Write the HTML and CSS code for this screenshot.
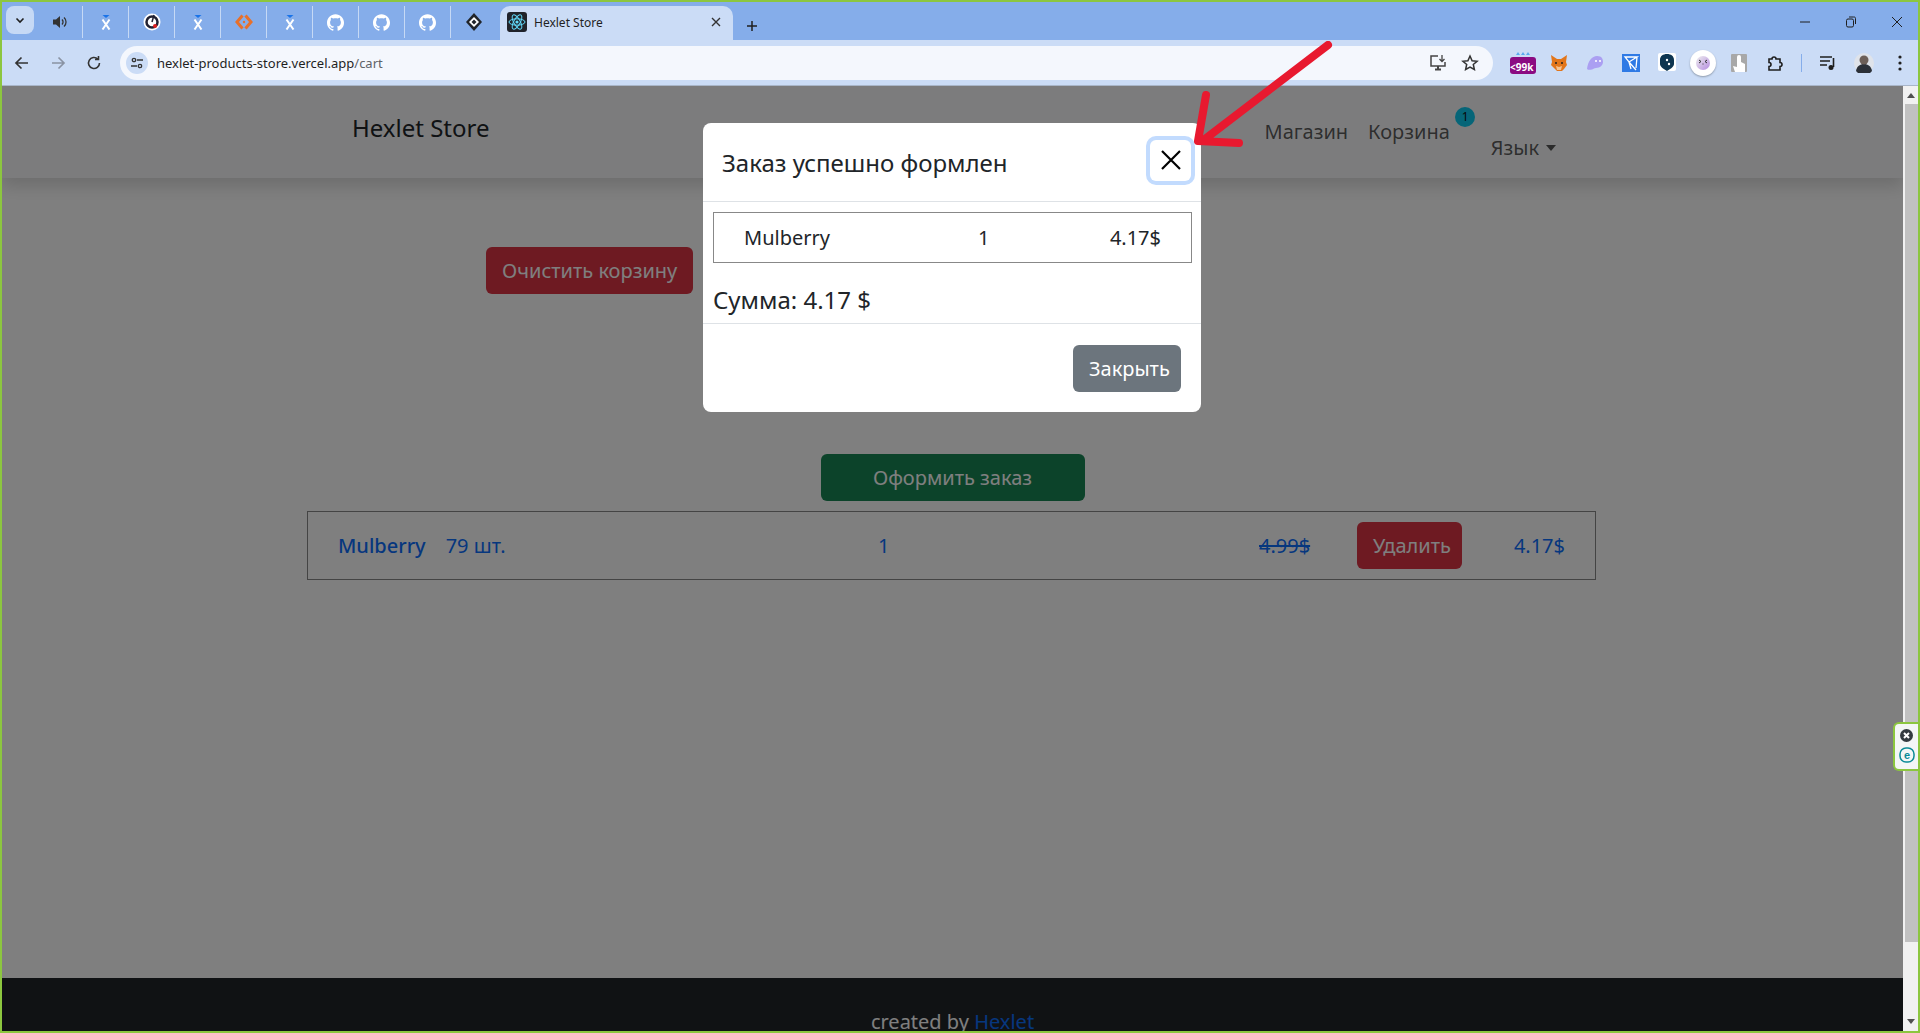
FILE: index.html
```html
<!DOCTYPE html>
<html lang="en">
<head>
    <meta charset="UTF-8">
    <title>Hexlet Store</title>
    <link rel="stylesheet" href="styles.css">
</head>
<body>
<svg class="defs" width="0" height="0">
    <symbol id="gh" viewBox="0 0 24 24"><path fill="currentColor" d="M12 .297c-6.63 0-12 5.373-12 12 0 5.303 3.438 9.8 8.205 11.385.6.113.82-.258.82-.577 0-.285-.01-1.04-.015-2.04-3.338.724-4.042-1.61-4.042-1.61C4.422 18.07 3.633 17.7 3.633 17.7c-1.087-.744.084-.729.084-.729 1.205.084 1.838 1.236 1.838 1.236 1.07 1.835 2.809 1.305 3.495.998.108-.776.417-1.305.76-1.605-2.665-.3-5.466-1.332-5.466-5.93 0-1.31.465-2.38 1.235-3.22-.135-.303-.54-1.523.105-3.176 0 0 1.005-.322 3.3 1.23.96-.267 1.98-.399 3-.399 1.02 0 2.04.132 3 .399 2.28-1.552 3.285-1.23 3.285-1.23.645 1.653.24 2.873.12 3.176.765.84 1.23 1.91 1.23 3.22 0 4.61-2.805 5.625-5.475 5.92.42.36.81 1.096.81 2.22 0 1.606-.015 2.896-.015 3.286 0 .315.21.69.825.57C20.565 22.092 24 17.592 24 12.297c0-6.627-5.373-12-12-12"/></symbol>
    <symbol id="xtab" viewBox="0 0 16 16"><path fill="#1a73e8" d="M4.5 1h7L8 4z"/><path stroke="#fff" stroke-width="2" fill="none" d="M4.5 5.5l7 10M11.5 5.5l-7 10"/></symbol>
</svg>
<div class="window">
    <div class="tabbar">
        <div class="tab-search"><svg width="12" height="12" viewBox="0 0 12 12"><path d="M2.5 4.5L6 8l3.5-3.5" fill="none" stroke="#1f1f1f" stroke-width="1.6"/></svg></div>
        <div class="pinned">
            <div class="pin"><svg width="16" height="16" viewBox="0 0 16 16"><path fill="#333" d="M1 5.5h3L8 2v12L4 10.500H1z"/><path fill="none" stroke="#333" stroke-width="1.3" d="M10 5.500a3.500 3.500 0 0 1 0 5M12 3.500a6 6 0 0 1 0 9"/></svg></div>
            <div class="pin"><svg width="16" height="16"><use href="#xtab"/></svg></div>
            <div class="pin"><svg width="18" height="18" viewBox="0 0 18 18"><circle cx="9" cy="9" r="8.500" fill="#fff"/><circle cx="9" cy="9" r="5.500" fill="none" stroke="#223" stroke-width="2.500"/><path d="M9 9l2-7" stroke="#223" stroke-width="1.500"/><circle cx="12" cy="13" r="2" fill="#e02020"/></svg></div>
            <div class="pin"><svg width="16" height="16"><use href="#xtab"/></svg></div>
            <div class="pin"><svg width="18" height="18" viewBox="0 0 18 18"><path fill="none" stroke="#e8702a" stroke-width="3" d="M7.500 2.500L2 9l5.500 6.500M10.500 2.500L16 9l-5.500 6.500"/><circle cx="9" cy="9" r="1.200" fill="#e8702a"/></svg></div>
            <div class="pin"><svg width="16" height="16"><use href="#xtab"/></svg></div>
            <div class="pin github"><svg width="17" height="17"><use href="#gh"/></svg></div>
            <div class="pin github"><svg width="17" height="17"><use href="#gh"/></svg></div>
            <div class="pin github"><svg width="17" height="17"><use href="#gh"/></svg></div>
            <div class="pin last"><svg width="18" height="18" viewBox="0 0 18 18"><path fill="#20242a" d="M9 0l8 9-8 9-8-9z"/><path fill="#fff" d="M9 4l5 5-5 5-5-5z"/><path fill="#20242a" d="M9 6.500L11.500 9 9 11.500 6.500 9z"/></svg></div>
        </div>
        <div class="tab-active">
            <svg class="favicon" width="20" height="20" viewBox="0 0 20 20"><rect width="20" height="20" rx="3" fill="#20232a"/><g fill="none" stroke="#61dafb" stroke-width="1"><ellipse cx="10" cy="10" rx="8" ry="3.200"/><ellipse cx="10" cy="10" rx="8" ry="3.200" transform="rotate(60 10 10)"/><ellipse cx="10" cy="10" rx="8" ry="3.200" transform="rotate(120 10 10)"/></g><circle cx="10" cy="10" r="1.600" fill="#61dafb"/></svg>
            <span class="tab-title">Hexlet Store</span>
            <svg class="tab-close" width="10" height="10" viewBox="0 0 10 10"><path d="M1 1l8 8M9 1l-8 8" stroke="#333" stroke-width="1.400"/></svg>
        </div>
        <svg class="tab-plus" width="12" height="12" viewBox="0 0 12 12"><path d="M6 1v10M1 6h10" stroke="#1f1f1f" stroke-width="1.500"/></svg>
        <div class="win-controls">
            <svg width="12" height="12" viewBox="0 0 12 12"><path d="M1 6h10" stroke="#1f1f1f"/></svg>
            <svg width="12" height="12" viewBox="0 0 12 12"><rect x="1.500" y="3" width="7" height="8" rx="1.500" fill="none" stroke="#1f1f1f"/><path d="M4 1h4.500A1.500 1.500 0 0 1 10.500 2.500V8" fill="none" stroke="#1f1f1f"/></svg>
            <svg width="12" height="12" viewBox="0 0 12 12"><path d="M1 1l10 10M11 1L1 11" stroke="#1f1f1f"/></svg>
        </div>
    </div>

    <div class="toolbar">
        <svg class="nav-btn" width="16" height="16" viewBox="0 0 16 16"><path d="M14 8H2.500M7.500 2.500L2 8l5.500 5.500" fill="none" stroke="#333" stroke-width="1.700"/></svg>
        <svg class="nav-btn" width="16" height="16" viewBox="0 0 16 16"><path d="M2 8h11.500M8.500 2.500L14 8l-5.500 5.500" fill="none" stroke="#8a93a3" stroke-width="1.700"/></svg>
        <svg class="nav-btn" width="16" height="16" viewBox="0 0 16 16"><path d="M13.500 8a5.500 5.500 0 1 1-1.700-4M12.500 1v3.500H9" fill="none" stroke="#333" stroke-width="1.600"/></svg>
        <div class="address">
            <div class="site-info"><svg width="14" height="14" viewBox="0 0 14 14"><g fill="none" stroke="#333" stroke-width="1.300"><circle cx="4" cy="4" r="1.700"/><path d="M7 4h6M1 10h6"/><circle cx="10" cy="10" r="1.700"/></g></svg></div>
            <span class="url">hexlet-products-store.vercel.app<span class="url-path">/cart</span></span>
            <svg class="addr-icon" width="18" height="18" viewBox="0 0 18 18"><path d="M9 2H2v10h14V8" fill="none" stroke="#444" stroke-width="1.500"/><path d="M6 15.500h6M9 12v3" stroke="#444" stroke-width="2"/><path d="M13 1v6M10.500 5L13 7.500 15.500 5" fill="none" stroke="#444" stroke-width="1.300"/></svg>
            <svg class="addr-icon" width="18" height="18" viewBox="0 0 18 18"><path d="M9 2l2.100 4.700 5 .5-3.800 3.300 1.100 5L9 13l-4.400 2.500 1.100-5L1.900 7.200l5-.5z" fill="none" stroke="#333" stroke-width="1.500"/></svg>
        </div>
        <div class="extensions">
            <div class="ext ext-wide"><svg width="26" height="24" viewBox="0 0 26 24"><path fill="#5aa9f0" d="M8 1l2 3H6zM13 1l2 3h-4zM18 1l2 3h-4z"/><rect x="0" y="6" width="26" height="17" rx="3" fill="#8b0b82"/></svg><span class="ext-label">&lt;99k</span></div>
            <div class="ext"><svg width="18" height="18" viewBox="0 0 18 18"><path fill="#e2761b" d="M1 1l6 4h4l6-4-1 7 1 3-3 4-2 2H7l-2-2-4-4 1-3z"/><path fill="#f6c391" d="M6 12l3 1 3-1-1 4H7z"/><circle cx="6" cy="9" r="1" fill="#222"/><circle cx="12" cy="9" r="1" fill="#222"/></svg></div>
            <div class="ext"><svg width="18" height="18" viewBox="0 0 18 18"><path fill="#ab9ff2" d="M1 15C2 7 6 2 11 2s6 3 6 6-3 6-7 6c-2 0-2 1-4 1.500S2 16 1 15z"/><circle cx="10" cy="7" r="1" fill="#fff"/><circle cx="14" cy="7" r="1" fill="#fff"/></svg></div>
            <div class="ext"><svg width="18" height="18" viewBox="0 0 18 18"><rect width="18" height="18" fill="#2f7ae5"/><path fill="none" stroke="#fff" stroke-width="1.300" d="M3 3h12L7 8zM7 8l2 7M7 8l7 8M15 3l-1 11"/></svg></div>
            <div class="ext"><svg width="18" height="20" viewBox="0 0 18 20"><rect width="18" height="18" rx="2" fill="#fff"/><path fill="#0d3550" d="M9 1c4 0 7 2 7 6v4c0 3-4 5-7 7-3-2-7-4-7-7V7c0-4 3-6 7-6z"/><circle cx="9" cy="7" r="1.200" fill="#fff"/><circle cx="11" cy="11" r="1.200" fill="#fff"/></svg></div>
            <div class="ext ext-circle"><svg width="14" height="14" viewBox="0 0 14 14"><defs><linearGradient id="mm" x1="0" y1="0" x2="1" y2="1"><stop offset="0" stop-color="#eee"/><stop offset="1" stop-color="#b58ce0"/></linearGradient></defs><rect width="14" height="14" rx="1" fill="url(#mm)"/><path d="M3 4l2 1.500L3 7M11 4L9 5.500 11 7M6.500 8h1" fill="none" stroke="#333"/></svg></div>
            <div class="ext"><svg width="16" height="18" viewBox="0 0 16 18"><rect width="16" height="18" rx="1" fill="#a8a8a8"/><path fill="#fff" d="M6 3a2 2 0 0 1 4 0v5l4 2v8H4l-2-6 4 1z"/></svg></div>
            <div class="ext"><svg width="16" height="18" viewBox="0 0 16 18"><path fill="none" stroke="#1f1f1f" stroke-width="1.600" d="M2 5h3a2 2 0 0 1 4 0h4v3.500a2 2 0 0 1 0 4V16H2v-3.500a2 2 0 0 0 0-4z"/></svg></div>
            <div class="ext-sep"></div>
            <div class="ext"><svg width="18" height="16" viewBox="0 0 18 16"><path d="M1 2h12M1 6h10M1 10h7" stroke="#1f1f1f" stroke-width="1.600"/><path d="M14.500 3v9" stroke="#1f1f1f" stroke-width="1.600"/><circle cx="12" cy="12.500" r="2.500" fill="#1f1f1f"/></svg></div>
            <div class="ext avatar"><svg width="20" height="20" viewBox="0 0 20 20"><circle cx="10" cy="10" r="10" fill="#dfe3ea"/><path fill="#2b3038" d="M2 18c1-5 4-7 8-7s7 2 8 7a10 10 0 0 1-16 0z"/><circle cx="10" cy="7" r="4.500" fill="#6c5f58"/></svg></div>
            <div class="ext"><svg width="4" height="16" viewBox="0 0 4 16"><circle cx="2" cy="2" r="1.600" fill="#1f1f1f"/><circle cx="2" cy="8" r="1.600" fill="#1f1f1f"/><circle cx="2" cy="14" r="1.600" fill="#1f1f1f"/></svg></div>
        </div>
    </div>

    <div class="viewport">
        <div class="page">
            <nav class="navbar">
                <a class="brand">Hexlet Store</a>
                <div class="nav-links">
                    <a class="nav-link">Магазин</a>
                    <a class="nav-link cart-link">Корзина<span class="badge">1</span></a>
                    <a class="nav-link lang">Язык<span class="caret"></span></a>
                </div>
            </nav>

            <main class="cart">
                <div class="cart-actions">
                    <button class="btn btn-danger">Очистить корзину</button>
                    <button class="btn btn-secondary">Вернуться назад</button>
                    <span class="cart-total">Сумма: 4.17 $</span>
                </div>
                <div class="cart-checkout">
                    <button class="btn btn-success">Оформить заказ</button>
                </div>
                <div class="cart-row">
                    <div class="row-name"><a class="row-title">Mulberry</a><span class="row-stock">79 шт.</span></div>
                    <span class="row-count">1</span>
                    <s class="row-old">4.99$</s>
                    <button class="btn btn-danger btn-remove">Удалить</button>
                    <span class="row-price">4.17$</span>
                </div>
            </main>

            <footer class="footer">created by <a class="footer-link">Hexlet</a></footer>

            <div class="backdrop"></div>

            <div class="modal">
                <div class="modal-header">
                    <span class="modal-title">Заказ успешно формлен</span>
                    <div class="modal-close"><svg width="22" height="22" viewBox="0 0 22 22"><path d="M2 2l18 18M20 2L2 20" stroke="#000" stroke-width="2.200"/></svg></div>
                </div>
                <div class="modal-body">
                    <div class="order-row">
                        <span class="order-name">Mulberry</span>
                        <span class="order-count">1</span>
                        <span class="order-price">4.17$</span>
                    </div>
                    <div class="order-total">Сумма: 4.17 $</div>
                </div>
                <div class="modal-footer">
                    <button class="btn btn-close-modal">Закрыть</button>
                </div>
            </div>
        </div>

        <div class="scrollbar">
            <div class="scroll-up"></div>
            <div class="scroll-thumb"></div>
            <div class="scroll-down"></div>
        </div>
    </div>

    <div class="eset-widget">
        <svg width="13" height="13" viewBox="0 0 13 13"><circle cx="6.500" cy="6.500" r="6.500" fill="#333a40"/><path d="M4 4l5 5M9 4L4 9" stroke="#fff" stroke-width="2"/></svg>
        <svg width="16" height="16" viewBox="0 0 16 16"><rect x="1" y="1" width="14" height="14" rx="6" fill="none" stroke="#0a8a96" stroke-width="1.500"/><text x="8" y="11.500" font-size="11" font-weight="700" font-family="Liberation Sans" text-anchor="middle" fill="#0a8a96">e</text></svg>
    </div>

    <svg class="red-arrow" width="150" height="110" viewBox="0 0 150 110"><path d="M135 4L12 98M13 54L5 100M5 100L46 102" fill="none" stroke="#e8192f" stroke-width="8" stroke-linecap="round"/></svg>
</div>
</body>
</html>
```

FILE: styles.css
```css
* {
    box-sizing: border-box;
}

body {
    margin: 0;
    height: 1033px;
    overflow: hidden;
    font-family: "Noto Sans", sans-serif;
    color: #212529;
}

.defs {
    display: block;
    height: 0;
}

.window {
    position: relative;
    height: 1033px;
    border: 2px solid #8cc63f;
    display: flex;
    flex-direction: column;
}

/* tab strip */
.tabbar {
    height: 38px;
    flex-shrink: 0;
    background: #85adea;
    display: flex;
    align-items: flex-end;
    padding-left: 4px;
}

.tab-search {
    width: 28px;
    height: 28px;
    margin-bottom: 6px;
    border-radius: 8px;
    background: #c6d9f5;
    display: flex;
    align-items: center;
    justify-content: center;
}

.pinned {
    display: flex;
    margin-left: 3px;
    margin-bottom: 2px;
}

.pin {
    width: 46px;
    height: 32px;
    display: flex;
    align-items: center;
    justify-content: center;
    border-right: 1px solid #c6d9f5;
    background-clip: content-box;
    position: relative;
}

.pin.last {
    border-right: none;
}

.github {
    color: #fff;
}

.tab-active {
    width: 233px;
    height: 34px;
    margin-left: 3px;
    background: #cbdcf6;
    border-radius: 10px 10px 0 0;
    display: flex;
    align-items: center;
    padding: 0 12px 2px 7px;
}

.favicon {
    flex-shrink: 0;
}

.tab-title {
    margin-left: 7px;
    font-size: 12px;
    color: #1f1f1f;
    flex: 1;
}

.tab-plus {
    margin: 0 0 8px 13px;
}

.win-controls {
    margin-left: auto;
    margin-bottom: 12px;
    margin-right: 15px;
    display: flex;
    gap: 34px;
}

/* toolbar */
.toolbar {
    height: 46px;
    flex-shrink: 0;
    background: #cbdcf6;
    border-bottom: 1px solid #a9b6c9;
    display: flex;
    align-items: center;
    padding-left: 12px;
}

.nav-btn {
    margin-right: 20px;
}

.address {
    width: 1374px;
    height: 34px;
    margin-left: -2px;
    border-radius: 17px;
    background: #f4f7fd;
    display: flex;
    align-items: center;
    padding: 0 14px 0 6px;
}

.site-info {
    width: 22px;
    height: 22px;
    border-radius: 50%;
    background: #cbdcf6;
    display: flex;
    align-items: center;
    justify-content: center;
}

.url {
    margin-left: 9px;
    font-size: 13px;
    color: #1f1f1f;
    flex: 1;
}

.url-path {
    color: #5f6368;
}

.addr-icon {
    margin-left: 14px;
}

.extensions {
    display: flex;
    align-items: center;
    margin-left: 12px;
}

.ext {
    width: 36px;
    display: flex;
    align-items: center;
    justify-content: center;
    position: relative;
}

.ext-wide svg {
    display: block;
}

.ext-label {
    position: absolute;
    left: 5px;
    top: 9px;
    font-size: 10px;
    font-weight: 700;
    color: #fff;
}

.ext-circle svg {
    box-sizing: content-box;
    padding: 6px;
    border-radius: 50%;
    background: #fff;
    box-shadow: 0 1px 2px rgba(0, 0, 0, 0.3);
}

.ext-sep {
    width: 1px;
    height: 18px;
    background: #85adea;
    margin: 0 8px;
}

/* page */
.viewport {
    flex: 1;
    display: flex;
    min-height: 0;
}

.page {
    position: relative;
    flex: 1;
    overflow: hidden;
    background: #fff;
}

.navbar {
    height: 92px;
    background: #f8f9fa;
    box-shadow: 0 8px 16px rgba(0, 0, 0, 0.15);
    display: flex;
    padding: 24px 0 0 350px;
}

.brand {
    font-size: 24px;
    line-height: 36px;
}

.nav-links {
    margin-left: 775px;
    display: flex;
    font-size: 20px;
    line-height: 30px;
    padding-top: 7px;
    color: rgba(0, 0, 0, 0.65);
    gap: 20px;
}

.cart-link {
    position: relative;
}

.badge {
    position: absolute;
    left: 87px;
    top: -10px;
    width: 20px;
    height: 20px;
    border-radius: 50%;
    background: #0dcaf0;
    color: #111;
    font-size: 12px;
    line-height: 20px;
    text-align: center;
}

.lang {
    margin-left: 21px;
    display: flex;
    align-items: center;
}

.caret {
    margin-left: 7px;
    border-top: 6px solid rgba(0, 0, 0, 0.65);
    border-left: 5px solid transparent;
    border-right: 5px solid transparent;
}

.cart {
    height: 800px;
    padding-top: 69px;
}

.btn {
    height: 47px;
    padding: 0 16px;
    border: none;
    border-radius: 6px;
    font-family: inherit;
    font-size: 20px;
    color: #fff;
}

.btn-danger {
    background: #dc3545;
}

.btn-secondary,
.btn-close-modal {
    background: #6c757d;
}

.btn-success {
    background: #198754;
}

.cart-actions {
    display: flex;
    align-items: flex-start;
    gap: 10px;
    padding-left: 484px;
}

.cart-total {
    margin-left: 70px;
    font-size: 24px;
    line-height: 40px;
}

.cart-checkout {
    display: flex;
    justify-content: center;
    margin-top: 160px;
}

.btn-success {
    width: 264px;
}

.cart-row {
    width: 1289px;
    height: 69px;
    margin: 10px 0 0 305px;
    border: 1px solid #888;
    display: flex;
    align-items: center;
    padding: 0 30px;
    font-size: 20px;
    color: #0d6efd;
}

.row-name {
    width: 540px;
    display: flex;
    gap: 20px;
}

.row-title {
    font-weight: 500;
}

.row-count {
    width: 381px;
}

.row-old {
    width: 98px;
}

.btn-remove {
    width: 105px;
    margin-right: auto;
}

.footer {
    height: 147px;
    background: #212529;
    color: #fff;
    font-size: 20px;
    text-align: center;
    padding-top: 30px;
}

.footer-link {
    color: #0d6efd;
}

.backdrop {
    position: absolute;
    inset: 0;
    background: rgba(0, 0, 0, 0.5);
}

.modal {
    position: absolute;
    left: 701px;
    top: 37px;
    width: 498px;
    height: 289px;
    background: #fff;
    border-radius: 8px;
    display: flex;
    flex-direction: column;
}

.modal-header {
    height: 79px;
    border-bottom: 1px solid #dee2e6;
    display: flex;
    align-items: center;
    justify-content: space-between;
    padding: 0 10px 0 19px;
}

.modal-title {
    font-size: 24px;
}

.modal-close {
    width: 41px;
    height: 41px;
    margin-top: -4px;
    border-radius: 6px;
    box-shadow: 0 0 0 4px #c2dbfe;
    display: flex;
    align-items: center;
    justify-content: center;
}

.modal-body {
    height: 122px;
    border-bottom: 1px solid #dee2e6;
    padding: 10px 9px 0 10px;
}

.order-row {
    height: 51px;
    border: 1px solid #888;
    display: flex;
    align-items: center;
    padding: 0 30px;
    font-size: 20px;
}

.order-name {
    width: 234px;
}

.order-count {
    flex: 1;
}

.order-total {
    margin-top: 20px;
    font-size: 24px;
    line-height: 34px;
}

.modal-footer {
    flex: 1;
    display: flex;
    justify-content: flex-end;
    padding: 21px 20px 0 0;
}

.btn-close-modal {
    width: 108px;
}

/* scrollbar stays above the backdrop */
.scrollbar {
    width: 15px;
    background: #f1f1f1;
    display: flex;
    flex-direction: column;
    align-items: center;
}

.scroll-up {
    margin-top: 7px;
    border-bottom: 5px solid #505050;
    border-left: 4px solid transparent;
    border-right: 4px solid transparent;
}

.scroll-thumb {
    width: 13px;
    height: 838px;
    margin: 6px 0 0 2px;
    background: #c1c1c1;
}

.scroll-down {
    margin-top: auto;
    margin-bottom: 7px;
    border-top: 5px solid #505050;
    border-left: 4px solid transparent;
    border-right: 4px solid transparent;
}

.eset-widget {
    position: absolute;
    right: 0;
    top: 720px;
    width: 25px;
    height: 49px;
    background: #f4f6f6;
    border: 2px solid #8cc63f;
    border-right: none;
    border-radius: 6px 0 0 6px;
    display: flex;
    flex-direction: column;
    align-items: center;
    gap: 5px;
    padding-top: 5px;
}

.red-arrow {
    position: absolute;
    left: 1191px;
    top: 39px;
}
```
